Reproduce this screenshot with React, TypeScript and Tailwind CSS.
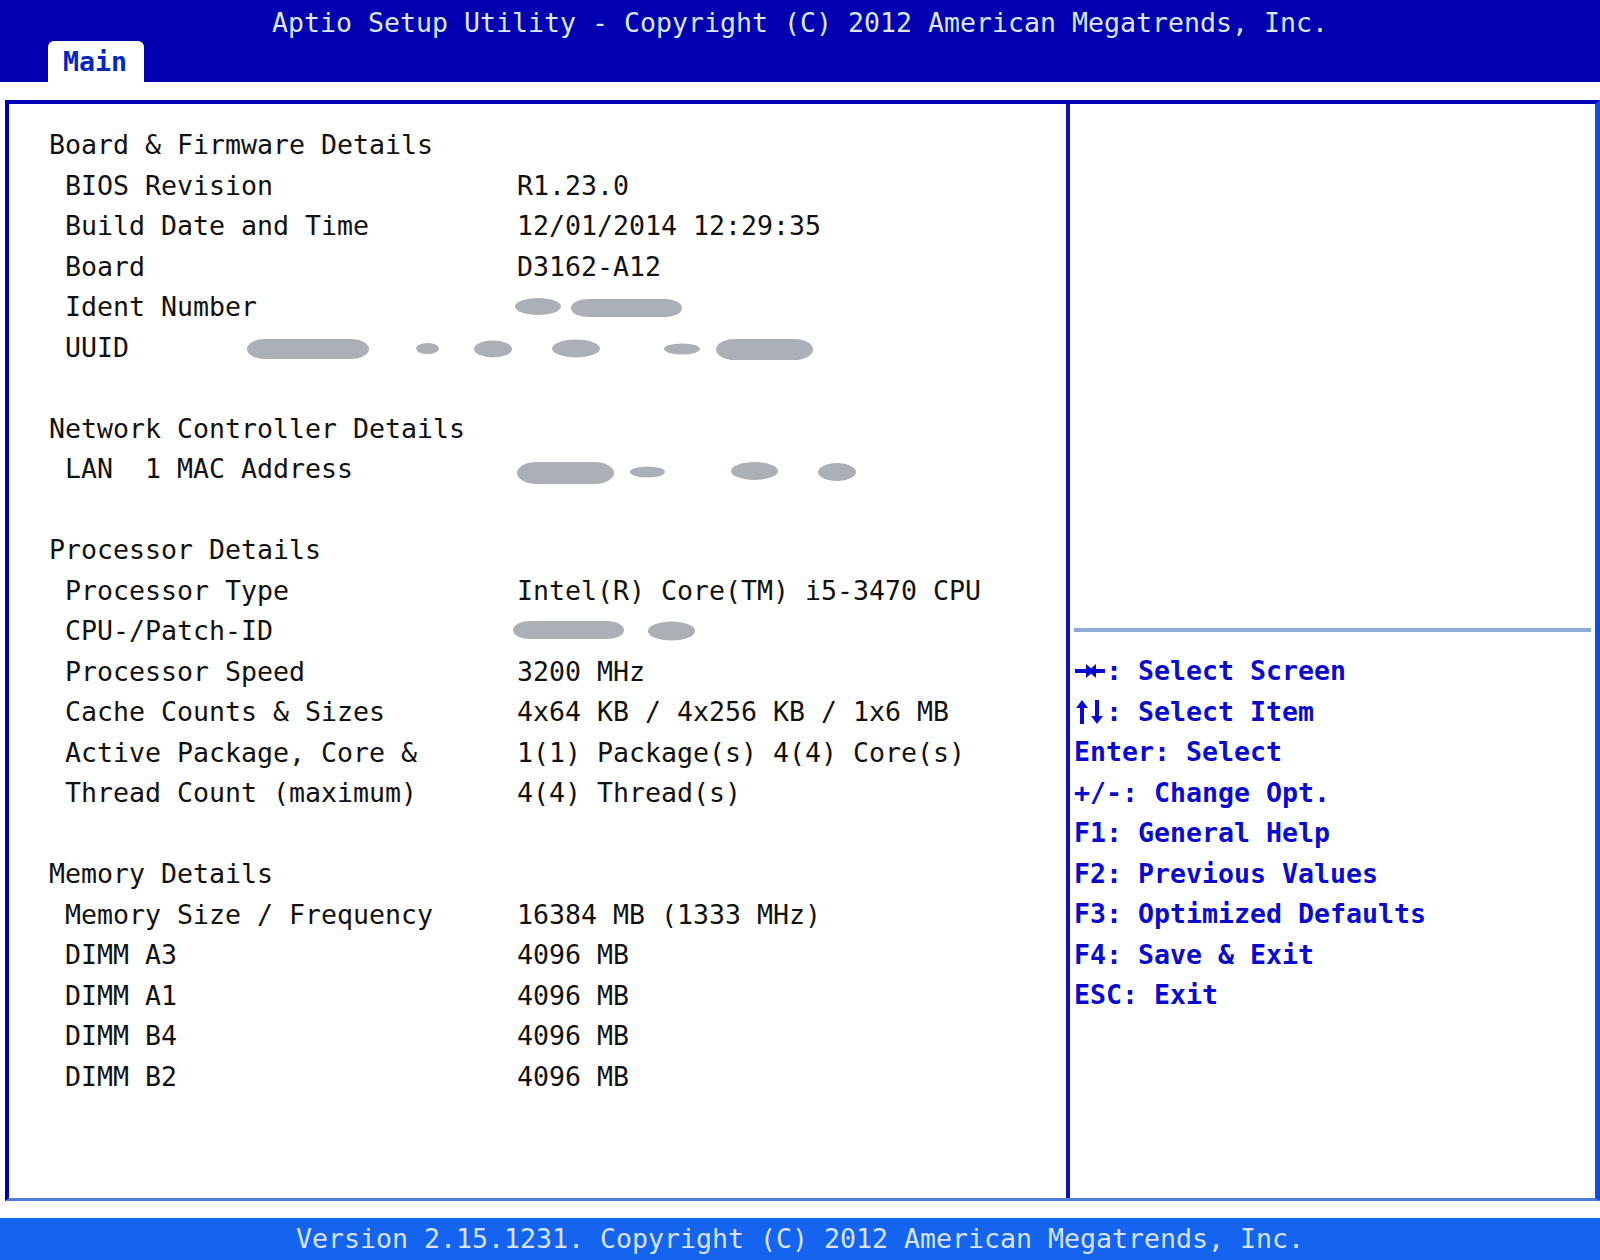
import React from "react";

type Blob = { x: number; y: number; w: number; h: number };
type Row =
  | { kind: "blank" }
  | { kind: "head"; text: string }
  | { kind: "item"; label: string; value?: string; blobs?: Blob[] };

const el = (cx: number, cy: number, rx: number, ry: number): Blob => ({ x: cx - rx, y: cy - ry, w: rx * 2, h: ry * 2 });

const rows: Row[] = [
  { kind: "head", text: "Board & Firmware Details" },
  { kind: "item", label: "BIOS Revision", value: "R1.23.0" },
  { kind: "item", label: "Build Date and Time", value: "12/01/2014 12:29:35" },
  { kind: "item", label: "Board", value: "D3162-A12" },
  { kind: "item", label: "Ident Number", blobs: [el(529, 19.5, 23, 8.5), { x: 562, y: 12, w: 111, h: 18 }] },
  {
    kind: "item",
    label: "UUID",
    blobs: [
      { x: 238, y: 11, w: 122, h: 20 },
      el(418.5, 20.5, 11.5, 5.5),
      el(484, 21, 19, 8.5),
      el(567, 20.5, 24, 9),
      el(673, 21, 18, 5.5),
      { x: 707, y: 11, w: 97, h: 21 },
    ],
  },
  { kind: "blank" },
  { kind: "head", text: "Network Controller Details" },
  {
    kind: "item",
    label: "LAN  1 MAC Address",
    blobs: [{ x: 508, y: 13, w: 97, h: 22 }, el(638.5, 23, 17.5, 5.5), el(745.5, 22, 23.5, 9), el(828, 23, 19, 9)],
  },
  { kind: "blank" },
  { kind: "head", text: "Processor Details" },
  { kind: "item", label: "Processor Type", value: "Intel(R) Core(TM) i5-3470 CPU" },
  { kind: "item", label: "CPU-/Patch-ID", blobs: [{ x: 504, y: 10, w: 111, h: 18 }, el(662.5, 20, 23.5, 9.5)] },
  { kind: "item", label: "Processor Speed", value: "3200 MHz" },
  { kind: "item", label: "Cache Counts & Sizes", value: "4x64 KB / 4x256 KB / 1x6 MB" },
  { kind: "item", label: "Active Package, Core &", value: "1(1) Package(s) 4(4) Core(s)" },
  { kind: "item", label: "Thread Count (maximum)", value: "4(4) Thread(s)" },
  { kind: "blank" },
  { kind: "head", text: "Memory Details" },
  { kind: "item", label: "Memory Size / Frequency", value: "16384 MB (1333 MHz)" },
  { kind: "item", label: "DIMM A3", value: "4096 MB" },
  { kind: "item", label: "DIMM A1", value: "4096 MB" },
  { kind: "item", label: "DIMM B4", value: "4096 MB" },
  { kind: "item", label: "DIMM B2", value: "4096 MB" },
];

function LeftRightArrows() {
  return (
    <svg width={32} height={24} viewBox="0 0 32 24" className="inline-block align-[-3px]" fill="#0a0ad2">
      <rect x={1} y={10} width={14} height={4} />
      <polygon points="12,5 20,12 12,19" />
      <polygon points="22,5 14,12 22,19" />
      <rect x={20} y={10} width={11} height={4} />
    </svg>
  );
}

function UpDownArrows() {
  return (
    <svg width={32} height={26} viewBox="0 0 32 26" className="inline-block align-[-4px]" fill="#0a0ad2">
      <polygon points="8,1 14,9 2,9" />
      <rect x={6} y={8} width={4} height={17} />
      <polygon points="23,25 29,17 17,17" />
      <rect x={21} y={1} width={4} height={17} />
    </svg>
  );
}

const help: { icon?: "lr" | "ud"; text: string }[] = [
  { icon: "lr", text: ": Select Screen" },
  { icon: "ud", text: ": Select Item" },
  { text: "Enter: Select" },
  { text: "+/-: Change Opt." },
  { text: "F1: General Help" },
  { text: "F2: Previous Values" },
  { text: "F3: Optimized Defaults" },
  { text: "F4: Save & Exit" },
  { text: "ESC: Exit" },
];

function Blobs({ blobs }: { blobs: Blob[] }) {
  return (
    <svg className="absolute left-0 top-0" width={900} height={41} viewBox="0 0 900 41">
      {blobs.map((b, i) =>
        b.w > 60 ? (
          <rect key={i} x={b.x} y={b.y} width={b.w} height={b.h} rx={b.h * 0.9} ry={b.h / 2} fill="#abb0b7" />
        ) : (
          <ellipse key={i} cx={b.x + b.w / 2} cy={b.y + b.h / 2} rx={b.w / 2} ry={b.h / 2} fill="#abb0b7" />
        )
      )}
    </svg>
  );
}

export default function App() {
  return (
    <div className="w-[1600px] h-[1260px] bg-white flex flex-col font-['DejaVu_Sans_Mono',monospace] text-[26.58px] whitespace-pre overflow-hidden">
      {/* header */}
      <div className="h-[82px] bg-[#0000b0] flex flex-col shrink-0">
        <div className="h-[41px] flex items-center justify-center pt-[5px] text-[#dce6ff] leading-none">
          Aptio Setup Utility - Copyright (C) 2012 American Megatrends, Inc.
        </div>
        <div className="h-[41px] flex">
          <div className="ml-[48px] w-[96px] bg-white rounded-t-[6px] flex items-center pl-[15px] pt-[1px] text-[#0028c0] font-bold leading-none">
            Main
          </div>
        </div>
      </div>

      {/* frame */}
      <div className="mt-[18px] ml-[5px] h-[1101px] shrink-0 flex border-t-4 border-l-4 border-r-[5px] border-b-[3px] border-t-[#0000b8] border-l-[#0000b8] border-r-[#0a4ce8] border-b-[#4f7ed8]">
        {/* left panel */}
        <div className="w-[1061px] border-r-4 border-r-[#0a14c4] pt-[21px] text-[#111]">
          {rows.map((r, i) => {
            if (r.kind === "blank") return <div key={i} className="h-[40.5px]" />;
            if (r.kind === "head")
              return (
                <div key={i} className="h-[40.5px] leading-[40.5px] pl-[40px]">
                  {r.text}
                </div>
              );
            return (
              <div key={i} className="relative h-[40.5px] leading-[40.5px] flex">
                <span className="pl-[56px] w-[508px] shrink-0">{r.label}</span>
                {r.value && <span>{r.value}</span>}
                {r.blobs && <Blobs blobs={r.blobs} />}
              </div>
            );
          })}
        </div>
        {/* right panel */}
        <div className="flex-1 flex flex-col">
          <div className="h-[524px]" />
          <div className="mx-[4px] h-[4px] bg-[#8eaad6]" />
          <div className="pt-[19px] pl-[4px] text-[#0a0ad2] font-bold">
            {help.map((h, i) => (
              <div key={i} className="h-[40.5px] leading-[40.5px]">
                {h.icon === "lr" && <LeftRightArrows />}
                {h.icon === "ud" && <UpDownArrows />}
                {h.text}
              </div>
            ))}
          </div>
        </div>
      </div>

      {/* footer */}
      <div className="mt-[17px] h-[42px] shrink-0 bg-[#1464f0] flex items-center justify-center text-[#d6e2ff] leading-none pt-[1px]">
        Version 2.15.1231. Copyright (C) 2012 American Megatrends, Inc.
      </div>
    </div>
  );
}
